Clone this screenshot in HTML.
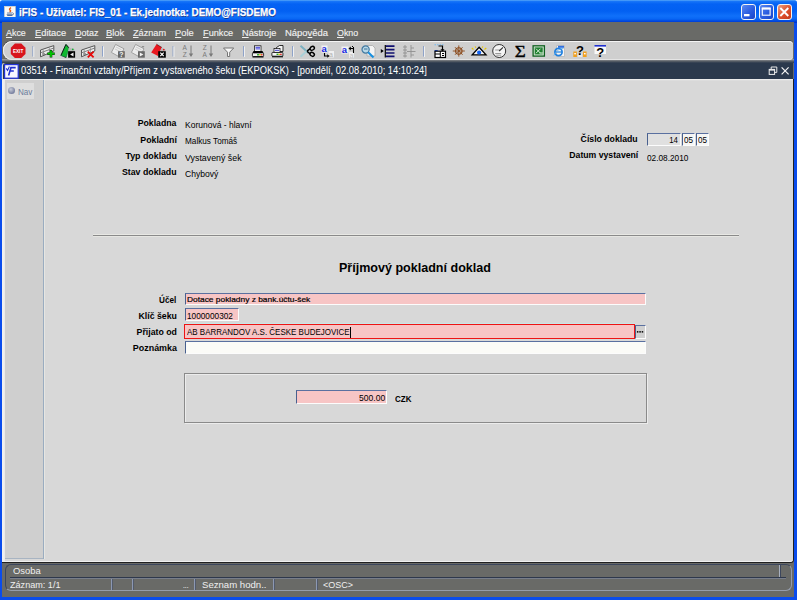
<!DOCTYPE html>
<html lang="cs">
<head>
<meta charset="utf-8">
<title>iFIS</title>
<style>
html,body{margin:0;padding:0;}
body{width:797px;height:600px;overflow:hidden;position:relative;background:#0a4cec;font-family:"Liberation Sans","DejaVu Sans",sans-serif;font-size:9px;color:#000;}
.abs{position:absolute;white-space:nowrap;}
.t{line-height:14px;}
.t u{text-decoration:underline;text-underline-offset:1px;}
#titlebar{left:0;top:0;width:797px;height:22.5px;border-radius:2.5px 2.5px 0 0;background:linear-gradient(#58a8f8 0,#1674f8 1.5px,#0462f4 4px,#0260f2 11px,#1070fa 16px,#0866f4 19px,#0048e0 21px,#0038d0 22.5px);}
.wbtn{top:4px;width:13px;height:13.8px;border:1px solid #f4f4f4;border-radius:3px;background:linear-gradient(135deg,#5a8af2,#2a5ce0 55%,#1a44c8);}
#win{left:2px;top:22px;width:792px;height:574.5px;background:#696a67;}
#tbgrad{left:2px;top:59px;width:792px;height:4px;background:linear-gradient(#a8a8a8,#5a6068 55%,#2b394d);}
#toolbar{left:3px;top:41px;width:790px;height:19px;background:#cfcfcf;border-radius:9px 4px 4px 9px;box-shadow:inset 0 1px 0 #f4f4f4,inset 1px 0 0 #f0f0f0,inset 0 -1px 0 #e4e4e4,0 -0.8px 0 #3c3c3c;}
#ititle{left:3.2px;top:62.5px;width:789.8px;height:16.5px;background:#2b394d;border-radius:3px 0 0 0;box-shadow:-1.2px 0 0 #dcdcdc;}
#content{left:2px;top:79px;width:791px;height:482.5px;background:#d8d8d8;border-radius:0 0 3px 0;box-shadow:inset 2.8px 0 0 #f0f0f0,inset 0 1.2px 0 #ececec,inset 0 -1px 0 #f0f0f0,0.5px 0.5px 0 0.5px #202020;}
#navpanel{left:5px;top:80px;width:39px;height:479px;background:#cfcfcf;box-shadow:inset -1px 0 0 #9aacc0,inset 0 -1px 0 #a8b4c2,1px 0 0 #e6e6e2;}
.fld{box-sizing:border-box;border-style:solid;border-width:1.3px 1px 1.2px 1.4px;border-color:#5a70a0 #fcfcfc #fcfcfc #48608e;}
.pink{background:#f7c5c5;}
.vs{width:1px;height:11px;top:579px;background:#8c98b2;box-shadow:1px 0 0 #525a6a;}
</style>
</head>
<body>
<div class="abs" style="left:0;top:0;width:797px;height:3px;background:#fff;"></div>
<div id="titlebar" class="abs"></div>
<svg class="abs" style="left:4.1px;top:5.6px" width="11.8" height="11.4" viewBox="0 0 12 12"><rect x="0.3" y="0.3" width="11.4" height="11.4" fill="#fbfaf6" stroke="#e0d8c0" stroke-width="0.6"/><path d="M7.2 1.6 Q4.6 3.2 6.2 4.4 Q7.6 5.4 5.6 6.4" stroke="#e85c10" stroke-width="1.5" fill="none"/><path d="M3 7 h5.2 v0.8 h-5.2z" fill="#38588c"/><path d="M2.4 8.8 h6.6 l-1 1.8 h-4.6z" fill="#5070a0"/><path d="M8.8 6.8 q2 1.2 -0.2 3.2" stroke="#38588c" stroke-width="0.9" fill="none"/></svg>
<div class="abs wbtn" style="left:740.5px"></div>
<div class="abs wbtn" style="left:758.5px"></div>
<div class="abs wbtn" style="left:776.5px;background:linear-gradient(135deg,#f0a080,#dc4e2a 55%,#c43a1a)"></div>
<svg class="abs" style="left:740px;top:3px" width="54" height="18" viewBox="740 3 54 18"><rect x="744" y="14" width="5.5" height="2.3" fill="#fff"/><rect x="762.3" y="8.2" width="7.8" height="7" fill="none" stroke="#fff" stroke-width="1.1"/><rect x="761.8" y="7.6" width="8.8" height="2" fill="#fff"/><path d="M780.3 8 l8 8 M788.3 8 l-8 8" stroke="#fff" stroke-width="1.9"/></svg>

<div id="win" class="abs"></div>
<!--TOOLBARBG-->
<div id="tbgrad" class="abs"></div>
<div id="toolbar" class="abs"></div>
<svg class="abs" style="left:0;top:38px" width="797" height="26" viewBox="0 38 797 26">
<defs>
<g id="sep"><rect x="-0.5" y="46" width="1" height="10.5" fill="#8ea2c8"/><rect x="0.5" y="46.5" width="1" height="10.5" fill="#f0f0f0"/></g>
<g id="rec"><path d="M0.5 5 L13.8 0.6 L13.8 6 L0.5 11.8 Z" fill="#ececec" stroke="#555" stroke-width="1"/><path d="M0.5 7.8 L13.8 3" stroke="#707070" stroke-width="0.9"/><path d="M3.2 4.6 v5.6 M9.4 2.6 v5" stroke="#909090" stroke-width="0.8"/><circle cx="3.6" cy="9" r="1" fill="none" stroke="#555" stroke-width="0.6"/></g>
<g id="doc"><path d="M4.6 0.4 L13 4.8 L8.6 13 L0.4 8.4 Z" fill="#ececec" stroke="#989898" stroke-width="0.9"/><path d="M5 3 L10.5 5.8 M4 5 L9 7.5" stroke="#c4c4c4" stroke-width="0.8"/></g>
</defs>
<!-- exit -->
<polygon points="14.9,43.5 21.3,43.5 25.5,47.7 25.5,53.9 21.3,58.1 14.9,58.1 10.8,53.9 10.8,47.7" fill="#d8141c"/>
<text x="18.1" y="52.8" font-family="Liberation Sans, sans-serif" font-weight="bold" font-size="5.2" fill="#fff" text-anchor="middle" textLength="10.2" lengthAdjust="spacingAndGlyphs">EXIT</text>
<use href="#sep" x="32.8"/>
<!-- insert record -->
<g transform="translate(40,45)"><use href="#rec"/><path d="M11 5 v7.4 M7.3 8.7 h7.4" stroke="#103010" stroke-width="2.6"/><path d="M11 5.4 v6.6 M7.7 8.7 h6.6" stroke="#00c800" stroke-width="1.7"/></g>
<!-- green figure + box -->
<g transform="translate(60.5,44)"><path d="M1.2 12.2 L6 14 L5 12.5 Z" fill="#000"/><path d="M5.5 0.4 L8.5 4 L5.8 13.2 L0.4 11.5 Z" fill="#10b830" stroke="#063" stroke-width="0.5"/><path d="M5.5 0.4 L8.5 4 M5.3 0.6 L0.4 11.5" stroke="#000" stroke-width="0.8"/><path d="M8.3 3.2 L14 5.5 L14 7.5 L7.5 7.5 Z" fill="#b8b8b8"/><circle cx="12.3" cy="5.3" r="0.9" fill="#10b030"/><rect x="7.6" y="7.2" width="7" height="6.5" fill="#000"/><path d="M13 8.4 L9.6 10.4 L13 12.4 Z" fill="#f0f0f0"/></g>
<!-- delete record -->
<g transform="translate(81,45)"><use href="#rec"/><path d="M6.8 6.6 l5.8 5.8 M12.6 6.6 l-5.8 5.8" stroke="#e80808" stroke-width="1.8"/></g>
<use href="#sep" x="102.5"/>
<!-- doc ? -->
<g transform="translate(111,44)"><use href="#doc"/><rect x="7" y="7.2" width="6.8" height="6.5" fill="#686868"/><text x="10.4" y="13.2" font-family="Liberation Sans, sans-serif" font-weight="bold" font-size="7" fill="#f8f8f8" text-anchor="middle">?</text></g>
<!-- doc play -->
<g transform="translate(131,44)"><use href="#doc"/><path d="M10.5 2 h3 l-1.5 2z" fill="#909090"/><rect x="7" y="7.2" width="6.8" height="6.5" fill="#686868"/><path d="M8.8 8.4 L12.4 10.5 L8.8 12.6 Z" fill="#f4f4f4"/></g>
<!-- red figure + x box -->
<g transform="translate(151,44)"><path d="M5.5 0.2 L11 3.6 L7 12 L0.2 8.6 Z" fill="#e81820"/><path d="M5.5 0.2 L11 3.6" stroke="#400" stroke-width="0.6"/><path d="M10.5 3.6 L14.6 6 L14.6 7.4 L9 7.4 Z" fill="#b8b8b8"/><circle cx="12.8" cy="5.6" r="0.9" fill="#e01820"/><rect x="7.2" y="7.2" width="7.6" height="6.5" fill="#000"/><path d="M9.3 8.6 l3.4 3.6 M12.7 8.6 l-3.4 3.6" stroke="#fff" stroke-width="1.2"/></g>
<use href="#sep" x="173"/>
<!-- sort AZ -->
<g transform="translate(182.5,45)" fill="#7a7a7a" font-family="Liberation Sans, sans-serif" font-size="6.5"><text x="0" y="5.2">A</text><text x="0.3" y="11.5">Z</text><path d="M8.5 0.5 v10" stroke="#7a7a7a" stroke-width="1"/><path d="M6.3 8.5 h4.4 l-2.2 3.5 z"/></g>
<g transform="translate(202.5,45)" fill="#7a7a7a" font-family="Liberation Sans, sans-serif" font-size="6.5"><text x="0.3" y="5.2">Z</text><text x="0" y="11.5">A</text><path d="M8.5 0.5 v10" stroke="#7a7a7a" stroke-width="1"/><path d="M6.3 8.5 h4.4 l-2.2 3.5 z"/></g>
<!-- filter -->
<path d="M223.5 48 h10.2 l-4 4.2 v4.3 h-2.2 v-4.3 z" fill="#f8f8f8" stroke="#747474" stroke-width="1"/>
<use href="#sep" x="243.5"/>
<!-- printer -->
<g transform="translate(252,45.5)"><rect x="2.5" y="0.3" width="6.5" height="5.5" fill="#fff" stroke="#000" stroke-width="0.7"/><path d="M3.5 1.8 h4.5 M3.5 3.4 h4.5" stroke="#2020d0" stroke-width="0.9"/><path d="M1.5 5.5 h9 l1 2 h-11 z" fill="#000"/><rect x="0.4" y="7.4" width="11.2" height="3.6" rx="0.8" fill="#f4f4f4" stroke="#000" stroke-width="0.8"/><rect x="5" y="8.7" width="2" height="1.2" fill="#10a010"/><rect x="7" y="8.7" width="2" height="1.2" fill="#e0c000"/><rect x="9" y="8.7" width="1.6" height="1.2" fill="#e01010"/><rect x="0.5" y="11" width="11" height="1" fill="#000"/></g>
<!-- printer with docs -->
<g transform="translate(271.5,45)"><path d="M5 2.5 L8 0.5 h3.5 v6 h-6.5 z" fill="#f4f4f4" stroke="#000" stroke-width="0.8"/><rect x="2.5" y="3.5" width="6" height="4" fill="#fff" stroke="#000" stroke-width="0.7"/><path d="M3.5 5.3 h4" stroke="#2020d0" stroke-width="0.9"/><rect x="0.4" y="7.4" width="11" height="3.8" rx="0.8" fill="#f4f4f4" stroke="#000" stroke-width="0.8"/><rect x="5" y="8.7" width="2" height="1.2" fill="#10a010"/><rect x="7" y="8.7" width="1.6" height="1.2" fill="#e0c000"/><rect x="8.6" y="8.7" width="1.6" height="1.2" fill="#e01010"/><rect x="0.5" y="11.3" width="11" height="1" fill="#000"/></g>
<use href="#sep" x="292.5"/>
<!-- scissors -->
<g transform="translate(300,45)"><path d="M0.5 0.8 L8.5 8" stroke="#7ab0c0" stroke-width="1.9"/><path d="M0.5 11.8 L8.5 4.4" stroke="#a8d0d8" stroke-width="1.9"/><path d="M7 6.2 L10.2 3.6 M7 6.2 L10.2 9" stroke="#000" stroke-width="1.5"/><ellipse cx="12.2" cy="3.3" rx="2.3" ry="1.8" fill="none" stroke="#000" stroke-width="1.4" transform="rotate(-35 12.2 3.3)"/><ellipse cx="12.2" cy="9.3" rx="2.3" ry="1.8" fill="none" stroke="#000" stroke-width="1.4" transform="rotate(35 12.2 9.3)"/></g>
<!-- copy -->
<g transform="translate(321,45)" font-family="Liberation Sans, sans-serif"><rect x="0.5" y="0.5" width="6" height="7" fill="#f4f4f4"/><text x="0.6" y="7" font-size="9.5" font-weight="bold" fill="#1428e0">a</text><rect x="7.5" y="6" width="5.5" height="6.5" fill="#f0f0f0"/><text x="8" y="12.3" font-size="7" fill="#b0b0b0">a</text><path d="M3.5 8 v3 h3.5" stroke="#000" stroke-width="1.1" fill="none"/><path d="M6.3 9.2 L8.6 11 L6.3 12.8 Z" fill="#000"/></g>
<!-- paste -->
<g transform="translate(341,45)" font-family="Liberation Sans, sans-serif"><rect x="0.5" y="1.5" width="7" height="7" fill="#f4f4f4"/><text x="0.8" y="8" font-size="9.5" font-weight="bold" fill="#1428e0">a</text><rect x="8" y="7" width="5" height="6" fill="#f0f0f0"/><text x="8.5" y="12.8" font-size="7" fill="#c0c0c0">a</text><path d="M12.5 8 v-4.5 h-3.5" stroke="#000" stroke-width="1.1" fill="none"/><path d="M9.8 1.6 L7.5 3.5 L9.8 5.4 Z" fill="#000"/><path d="M11 1 l2 2" stroke="#000" stroke-width="1"/></g>
<!-- magnifier -->
<g transform="translate(361,44.5)"><path d="M6 1 h5.5 l2.5 2.5 v8 h-8 z" fill="#f4f4f4" stroke="#a8a8a8" stroke-width="0.8"/><circle cx="4.6" cy="5" r="3.6" fill="#b8d8e8" stroke="#4078a0" stroke-width="1.2"/><path d="M3 4.5 h3.5" stroke="#306890" stroke-width="0.9"/><path d="M7.2 7.8 L12.5 13" stroke="#1890e0" stroke-width="2"/></g>
<!-- list -->
<g transform="translate(380.5,45)"><path d="M0.3 4 L3.3 6 L0.3 8 Z" fill="#000"/><rect x="4.2" y="0" width="1.2" height="12.5" fill="#000"/><path d="M5.5 1.2 h8.5 M5.5 4.6 h8.5 M5.5 8 h8.5 M5.5 11.4 h8.5" stroke="#101070" stroke-width="1.7"/></g>
<!-- gray tree -->
<g transform="translate(402.5,45)" stroke="#909090" stroke-width="0.9" fill="none"><path d="M2.5 0 v12.5 M8.5 0 v12.5 M0.5 2 h4 M0.5 5 h4 M0.5 8 h4 M0.5 11 h4 M4.5 6.5 h8.5 M8.5 3 h3 M8.5 10 h3"/></g>
<use href="#sep" x="423.5"/>
<!-- doc arrow -->
<g transform="translate(433.5,44)"><path d="M1 0.8 h9" stroke="#70b8f0" stroke-width="1" stroke-dasharray="1.5 1"/><path d="M5 2 h4 v4" stroke="#000" stroke-width="1.2" fill="none"/><path d="M7 5.2 h4 l-2 2.6 z" fill="#000"/><rect x="1.2" y="6" width="3" height="2.5" fill="#2050e0"/><rect x="1.5" y="7.2" width="10.5" height="6.3" fill="#fff" stroke="#000" stroke-width="1.2"/><path d="M6.8 7.2 v6.3 M1.5 10 h5.3 M8.5 9.5 h2 M8.5 11.5 h2" stroke="#000" stroke-width="1"/></g>
<!-- wheel -->
<g transform="translate(458.8,51)" stroke="#8a4818" fill="none"><circle r="3.2" stroke-width="1.1"/><path d="M-6 0 h12 M0 -5.6 v11.2 M-3.8 -3.8 l7.6 7.6 M3.8 -3.8 l-7.6 7.6" stroke-width="0.9"/></g>
<!-- triangle eye -->
<g transform="translate(471.5,46.5)"><path d="M2 3 L0.3 1.5 M13 3 L14.8 1.5 M4.5 1.2 L3.5 0 M10.5 1.2 L11.5 0" stroke="#e8c800" stroke-width="1.1"/><path d="M7.6 0.8 L14.5 8.3 H0.7 Z" fill="#f8f8f8" stroke="#000" stroke-width="1.3"/><circle cx="7.6" cy="6" r="2.1" fill="#1060f0"/></g>
<!-- clock -->
<g transform="translate(499.2,51)"><circle r="6.5" fill="#f4f4f4" stroke="#303030" stroke-width="1"/><path d="M-4 -1 h5 M-4 2.5 h6 M-3 4.2 h5" stroke="#909090" stroke-width="0.9"/><path d="M0 0 L3.8 -3.6" stroke="#303030" stroke-width="1.1"/></g>
<!-- sigma -->
<text x="514.8" y="56.6" font-family="Liberation Serif, serif" font-size="16" fill="#000" stroke="#000" stroke-width="0.35" textLength="11" lengthAdjust="spacingAndGlyphs">Σ</text>
<!-- excel -->
<g transform="translate(532.5,45.2)"><rect x="0.6" y="0.6" width="11.3" height="10.3" fill="#d8e8d8" stroke="#106020" stroke-width="1.3"/><rect x="2.2" y="2.2" width="8" height="7" fill="#208030"/><path d="M3.5 3.5 l4.5 4.5 M8 3.5 l-4.5 4.5" stroke="#d8f0d8" stroke-width="1"/><path d="M7 7.8 h3.5" stroke="#d8f0d8" stroke-width="1"/></g>
<!-- IE -->
<g transform="translate(553,45)"><path d="M3.5 0.5 h8 v11 h-8 z" fill="#f4f4f4" stroke="#b8b8b8" stroke-width="0.8"/><path d="M5 0.8 h6 v2 h-6z" fill="#3070e0"/><circle cx="5.5" cy="7" r="3.6" fill="none" stroke="#2080e0" stroke-width="1.7"/><path d="M2 7 h7" stroke="#2080e0" stroke-width="1.2"/><path d="M0.8 10.5 Q5 3 10.5 3.5" stroke="#60b0f0" stroke-width="0.9" fill="none"/></g>
<!-- ? with blocks -->
<g transform="translate(573,44.5)" font-family="Liberation Sans, sans-serif"><rect x="0.3" y="7" width="3.6" height="5.5" fill="#f0a020"/><rect x="10" y="7" width="3.6" height="5.5" fill="#f0a020"/><rect x="1.3" y="8.5" width="1.6" height="1.4" fill="#fff"/><rect x="11" y="8.5" width="1.6" height="1.4" fill="#fff"/><rect x="5" y="9" width="4" height="3.5" fill="#e8e8e8"/><text x="7" y="10.2" font-size="13" font-weight="bold" fill="#000" text-anchor="middle">?</text></g>
<!-- ? window -->
<g transform="translate(594,44.5)" font-family="Liberation Sans, sans-serif"><rect x="0.5" y="1.5" width="11.5" height="8" fill="#f8f8f8"/><rect x="0.5" y="0.5" width="11.5" height="1.6" fill="#2030d0"/><text x="6.3" y="12.3" font-size="13" font-weight="bold" fill="#000" text-anchor="middle">?</text></g>
</svg>

<div id="ititle" class="abs"></div>
<svg class="abs" style="left:4px;top:63.5px" width="15" height="15" viewBox="0 0 15 15"><rect x="0.6" y="0.6" width="13.6" height="13.6" fill="#f8f8ff" stroke="#2434d8" stroke-width="1.2"/><path d="M6.3 3.6 h5.4 M5.6 7 h4.2 M7 3.6 L4.6 11.4" stroke="#2030d0" stroke-width="1.6" fill="none"/><path d="M2.2 4.4 L3.6 6.4 L5.4 2.6" stroke="#2030d0" stroke-width="1.1" fill="none"/></svg>
<svg class="abs" style="left:766px;top:64px" width="26" height="14" viewBox="766 64 26 14"><path d="M771.2 69 v-2 h5.6 v5.4 h-2" stroke="#e8e8e8" stroke-width="1" fill="none"/><rect x="769.2" y="69.4" width="5.4" height="5" fill="none" stroke="#f0f0f0" stroke-width="1"/><path d="M769.2 70 h5.4" stroke="#f0f0f0" stroke-width="1.2"/><path d="M781.6 67.4 l7 7 M788.6 67.4 l-7 7" stroke="#f4f4f4" stroke-width="1.2"/></svg>

<div id="content" class="abs"></div>
<div id="navpanel" class="abs"></div>
<div class="abs" style="left:7px;top:83px;width:26.5px;height:16px;background:#dedede;"></div>
<div class="abs" style="left:8px;top:87px;width:7px;height:7px;border-radius:50%;background:radial-gradient(circle at 40% 35%,#c8ccd8,#7880a0 70%,#687090);"></div>

<!-- top-right fields -->
<div class="abs fld" style="left:647px;top:132.5px;width:33.5px;height:13px;background:#e0e0e0;"></div>
<div class="abs fld" style="left:682px;top:132.5px;width:12.5px;height:13px;background:#f6f6f4;"></div>
<div class="abs fld" style="left:696px;top:132.5px;width:12.5px;height:13px;background:#f6f6f4;"></div>

<!-- separator line -->
<div class="abs" style="left:93px;top:234px;width:646px;height:1px;background:#e8e8e4;"></div>
<div class="abs" style="left:93px;top:235px;width:646px;height:1px;background:#8a8a8a;"></div>
<div class="abs" style="left:93px;top:236px;width:646px;height:1.3px;background:#e6e6e2;"></div>

<!-- main fields -->
<div class="abs fld pink" style="left:184.5px;top:293px;width:461px;height:12.4px;"></div>
<div class="abs fld pink" style="left:184.5px;top:308.3px;width:54.5px;height:13.2px;"></div>
<div class="abs pink" style="left:184px;top:324px;width:451px;height:15.1px;box-sizing:border-box;border:1.3px solid #ee1414;border-right-width:0.6px;box-shadow:0 -0.8px 0 #c4ecec;"></div>
<div class="abs fld" style="left:184.5px;top:341.2px;width:461px;height:13.3px;background:#fbfbf7;"></div>
<div class="abs" style="left:349.8px;top:327px;width:1px;height:10.5px;background:#000;"></div>
<div class="abs fld" style="left:634.6px;top:325.4px;width:11.4px;height:13.2px;background:#d0d0d0;"></div>
<svg class="abs" style="left:636px;top:329.5px" width="9" height="4" viewBox="0 0 9 4"><rect x="0.9" y="1.1" width="1.5" height="1.5" fill="#000"/><rect x="3.3" y="1.1" width="1.5" height="1.5" fill="#000"/><rect x="5.7" y="1.1" width="1.5" height="1.5" fill="#000"/></svg>

<!-- group box -->
<div class="abs" style="left:183.5px;top:373.3px;width:463px;height:50px;box-sizing:border-box;border:1px solid #8a8a8a;box-shadow:inset 1px 1px 0 #ececec,1px 1px 0 #ececec;"></div>
<div class="abs fld pink" style="left:296px;top:390.3px;width:90.5px;height:13.5px;"></div>

<!-- status bar -->
<div class="abs" style="left:4.5px;top:563.5px;width:787px;height:27.5px;box-sizing:border-box;border:1px solid;border-color:#3c465c #949cac #949cac #3c465c;border-radius:6px;"></div>
<div class="abs" style="left:9.5px;top:577px;width:776px;height:1px;background:#2e384c;box-shadow:0 1px 0 #787e8a;"></div>
<div class="abs" style="left:779px;top:564.5px;width:1px;height:12.5px;background:#a8b0c0;box-shadow:1px 0 0 #3c465c;"></div>
<div class="abs vs" style="left:110.5px"></div>
<div class="abs vs" style="left:132px"></div>
<div class="abs vs" style="left:194px"></div>
<div class="abs vs" style="left:272.5px"></div>
<div class="abs vs" style="left:315.5px"></div>

<div class="abs t" id="title" style="left:19.10px;top:5.42px;font-size:10.9px;transform:scaleX(0.9080);transform-origin:left center;color:#fff;font-weight:bold;-webkit-text-stroke:0.25px #fff;text-shadow:0.7px 0.7px 0 #10308a;">iFIS - Uživatel: FIS_01 - Ek.jednotka: DEMO@FISDEMO</div>
<div class="abs t" id="m1" style="left:6.00px;top:25.77px;font-size:9.9px;transform:scaleX(0.9013);transform-origin:left center;color:#f0f0f0;-webkit-text-stroke:0.15px #f0f0f0;"><u>A</u>kce</div>
<div class="abs t" id="m2" style="left:34.60px;top:25.77px;font-size:9.9px;transform:scaleX(0.9438);transform-origin:left center;color:#f0f0f0;-webkit-text-stroke:0.15px #f0f0f0;"><u>E</u>ditace</div>
<div class="abs t" id="m3" style="left:74.50px;top:25.77px;font-size:9.9px;transform:scaleX(0.9065);transform-origin:left center;color:#f0f0f0;-webkit-text-stroke:0.15px #f0f0f0;"><u>D</u>otaz</div>
<div class="abs t" id="m4" style="left:106.40px;top:25.77px;font-size:9.9px;transform:scaleX(0.9522);transform-origin:left center;color:#f0f0f0;-webkit-text-stroke:0.15px #f0f0f0;"><u>B</u>lok</div>
<div class="abs t" id="m5" style="left:133.00px;top:25.77px;font-size:9.9px;transform:scaleX(0.9247);transform-origin:left center;color:#f0f0f0;-webkit-text-stroke:0.15px #f0f0f0;"><u>Z</u>áznam</div>
<div class="abs t" id="m6" style="left:175.00px;top:25.77px;font-size:9.9px;transform:scaleX(0.9453);transform-origin:left center;color:#f0f0f0;-webkit-text-stroke:0.15px #f0f0f0;"><u>P</u>ole</div>
<div class="abs t" id="m7" style="left:203.00px;top:25.77px;font-size:9.9px;transform:scaleX(0.9319);transform-origin:left center;color:#f0f0f0;-webkit-text-stroke:0.15px #f0f0f0;"><u>F</u>unkce</div>
<div class="abs t" id="m8" style="left:242.00px;top:25.77px;font-size:9.9px;transform:scaleX(0.9325);transform-origin:left center;color:#f0f0f0;-webkit-text-stroke:0.15px #f0f0f0;"><u>N</u>ástroje</div>
<div class="abs t" id="m9" style="left:284.90px;top:25.77px;font-size:9.9px;transform:scaleX(0.9571);transform-origin:left center;color:#f0f0f0;-webkit-text-stroke:0.15px #f0f0f0;">Nápo<u>v</u>ěda</div>
<div class="abs t" id="m10" style="left:336.80px;top:25.77px;font-size:9.9px;transform:scaleX(0.8979);transform-origin:left center;color:#f0f0f0;-webkit-text-stroke:0.15px #f0f0f0;"><u>O</u>kno</div>
<div class="abs t" id="it" style="left:20.70px;top:64.33px;font-size:10.0px;transform:scaleX(0.9361);transform-origin:left center;color:#fff;">03514 - Finanční vztahy/Příjem z vystaveného šeku (EKPOKSK) - [pondělí, 02.08.2010; 14:10:24]</div>
<div class="abs t" id="nav" style="left:17.60px;top:84.62px;font-size:8.6px;transform:scaleX(0.9414);transform-origin:left center;color:#6c7c9c;">Nav</div>
<div class="abs t" id="l1" style="right:620.40px;top:116.25px;font-size:9.1px;transform:scaleX(0.9595);transform-origin:right center;font-weight:bold;">Pokladna</div>
<div class="abs t" id="l2" style="right:620.40px;top:132.55px;font-size:9.1px;transform:scaleX(0.9655);transform-origin:right center;font-weight:bold;">Pokladní</div>
<div class="abs t" id="l3" style="right:620.40px;top:148.85px;font-size:9.1px;transform:scaleX(0.9737);transform-origin:right center;font-weight:bold;">Typ dokladu</div>
<div class="abs t" id="l4" style="right:620.40px;top:165.25px;font-size:9.1px;transform:scaleX(0.9663);transform-origin:right center;font-weight:bold;">Stav dokladu</div>
<div class="abs t" id="v1" style="left:184.80px;top:117.89px;font-size:8.7px;transform:scaleX(0.9795);transform-origin:left center;">Korunová - hlavní</div>
<div class="abs t" id="v2" style="left:184.80px;top:133.99px;font-size:8.7px;transform:scaleX(0.9427);transform-origin:left center;">Malkus Tomáš</div>
<div class="abs t" id="v3" style="left:184.80px;top:150.59px;font-size:8.7px;transform:scaleX(1.0161);transform-origin:left center;">Vystavený šek</div>
<div class="abs t" id="v4" style="left:184.80px;top:166.59px;font-size:8.7px;transform:scaleX(0.9878);transform-origin:left center;">Chybový</div>
<div class="abs t" id="l5" style="right:159.00px;top:132.45px;font-size:9.1px;transform:scaleX(0.9560);transform-origin:right center;font-weight:bold;">Číslo dokladu</div>
<div class="abs t" id="l6" style="right:159.00px;top:147.95px;font-size:9.1px;transform:scaleX(0.9546);transform-origin:right center;font-weight:bold;">Datum vystavení</div>
<div class="abs t" id="n1" style="right:118.80px;top:133.02px;font-size:8.9px;transform:scaleX(0.8810);transform-origin:right center;">14</div>
<div class="abs t" id="n2" style="left:684.00px;top:133.02px;font-size:8.9px;transform:scaleX(0.9114);transform-origin:left center;">05</div>
<div class="abs t" id="n3" style="left:697.80px;top:133.02px;font-size:8.9px;transform:scaleX(0.9114);transform-origin:left center;">05</div>
<div class="abs t" id="v5" style="left:647.00px;top:150.52px;font-size:8.9px;transform:scaleX(0.9320);transform-origin:left center;">02.08.2010</div>
<div class="abs t" id="h1" style="left:338.70px;top:260.84px;font-size:12.3px;transform:scaleX(1.0197);transform-origin:left center;font-weight:bold;">Příjmový pokladní doklad</div>
<div class="abs t" id="l7" style="right:620.50px;top:292.55px;font-size:9.1px;transform:scaleX(0.8950);transform-origin:right center;font-weight:bold;">Účel</div>
<div class="abs t" id="l8" style="right:620.50px;top:308.65px;font-size:9.1px;transform:scaleX(0.9640);transform-origin:right center;font-weight:bold;">Klíč šeku</div>
<div class="abs t" id="l9" style="right:620.50px;top:325.25px;font-size:9.1px;transform:scaleX(0.9633);transform-origin:right center;font-weight:bold;">Přijato od</div>
<div class="abs t" id="l10" style="right:620.50px;top:341.15px;font-size:9.1px;transform:scaleX(0.9826);transform-origin:right center;font-weight:bold;">Poznámka</div>
<div class="abs t" id="f1" style="left:186.70px;top:292.93px;font-size:8.0px;transform:scaleX(1.0463);transform-origin:left center;-webkit-text-stroke:0.2px #000;">Dotace pokladny z bank.účtu-šek</div>
<div class="abs t" id="f2" style="left:186.70px;top:308.85px;font-size:9.1px;transform:scaleX(0.9075);transform-origin:left center;">1000000302</div>
<div class="abs t" id="f3" style="left:186.70px;top:325.35px;font-size:9.1px;transform:scaleX(0.8762);transform-origin:left center;">AB BARRANDOV A.S. ČESKE BUDEJOVICE</div>
<div class="abs t" id="a1" style="right:412.30px;top:391.22px;font-size:8.9px;transform:scaleX(0.9611);transform-origin:right center;">500.00</div>
<div class="abs t" id="a2" style="left:395.00px;top:391.75px;font-size:9.1px;transform:scaleX(0.8769);transform-origin:left center;font-weight:bold;">CZK</div>
<div class="abs t" id="s1" style="left:13.00px;top:563.88px;font-size:9.3px;transform:scaleX(1.0144);transform-origin:left center;color:#f0f0f0;">Osoba</div>
<div class="abs t" id="s2" style="left:10.10px;top:577.74px;font-size:9.4px;transform:scaleX(0.9691);transform-origin:left center;color:#f0f0f0;">Záznam: 1/1</div>
<div class="abs t" id="s3" style="left:182.70px;top:577.74px;font-size:9.4px;transform:scaleX(0.7026);transform-origin:left center;color:#f0f0f0;">...</div>
<div class="abs t" id="s4" style="left:202.00px;top:577.74px;font-size:9.4px;transform:scaleX(1.0228);transform-origin:left center;color:#f0f0f0;">Seznam hodn..</div>
<div class="abs t" id="s5" style="left:323.00px;top:577.74px;font-size:9.4px;transform:scaleX(0.9595);transform-origin:left center;color:#f0f0f0;">&lt;OSC&gt;</div>
</body>
</html>
